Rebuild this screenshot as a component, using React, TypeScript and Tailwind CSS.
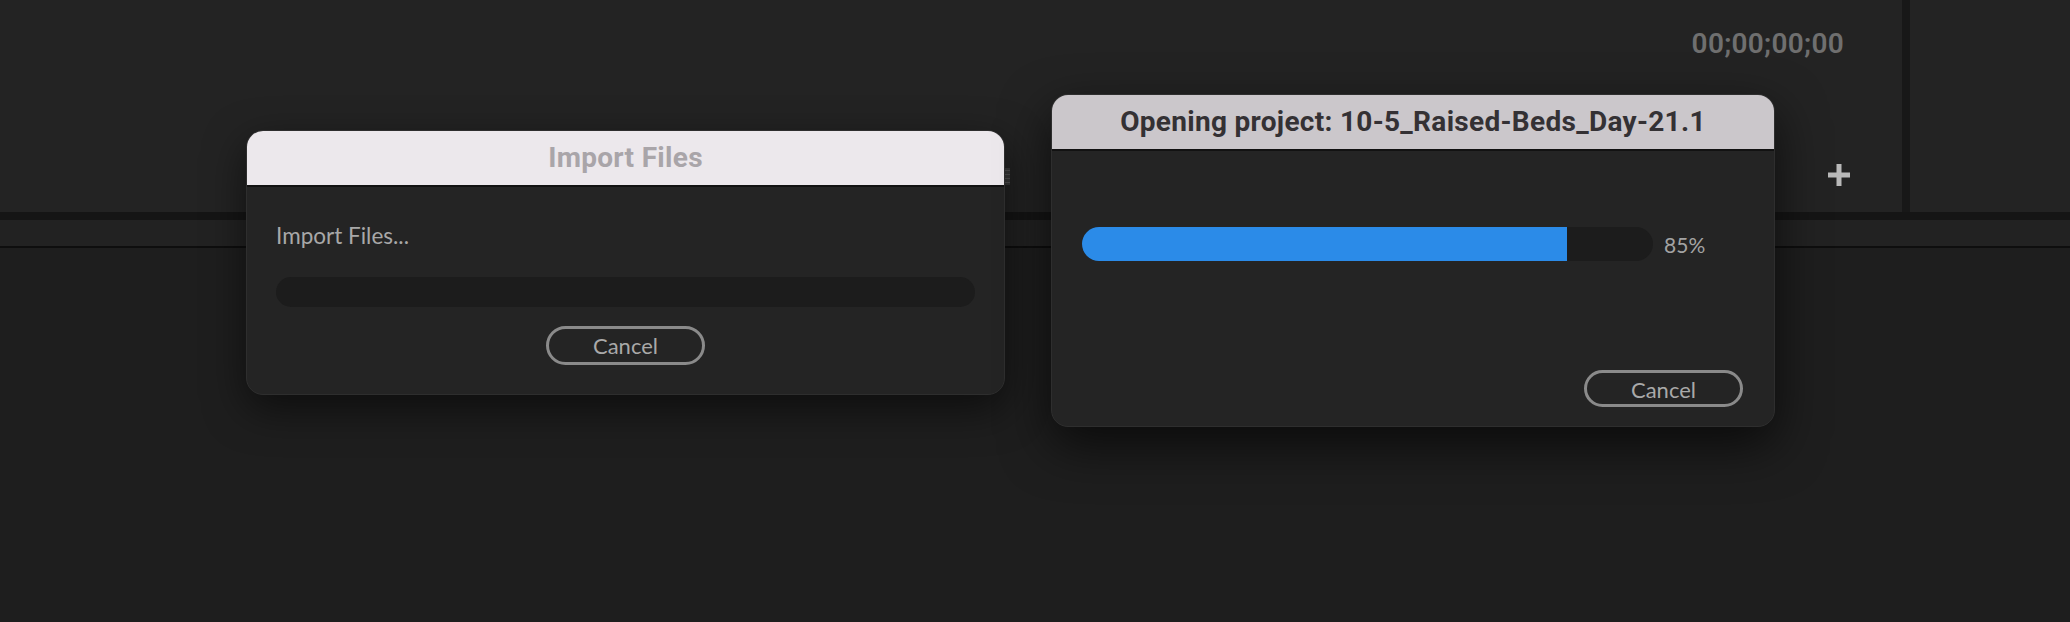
import React from 'react';

const sans = "font-['Lato','Open_Sans',sans-serif]";
const head = "font-['Roboto','Open_Sans',sans-serif]";

const CancelButton: React.FC<{ className?: string }> = ({ className = '' }) => (
  <button
    className={`w-[159px] rounded-full border-[3px] border-[#8a8a8a] bg-transparent text-[22px] text-[#a9a9a9] ${sans} ${className}`}
  >
    Cancel
  </button>
);

export default function App() {
  const percent = 85;

  return (
    <div className="relative h-[622px] w-[2070px] overflow-hidden bg-[#1e1e1e]">
      {/* Background workspace */}
      <div className="flex h-[212px] bg-[#232323]">
        <div className="flex flex-1 flex-col items-end">
          <div className={`mr-[58px] mt-[27px] text-[28px] font-semibold leading-[34px] tracking-[0.3px] text-[#6f6f6f] ${head}`}>
            00;00;00;00
          </div>
          <div className="mr-[52px] mt-[103px] flex h-[22px] w-[22px] items-center justify-center">
            <svg width="22" height="22" viewBox="0 0 22 22">
              <rect x="8.5" y="0" width="5" height="22" fill="#b9b9b9" />
              <rect x="0" y="8.5" width="22" height="5" fill="#b9b9b9" />
            </svg>
          </div>
        </div>
        <div className="w-[8px] bg-[#181818]" />
        <div className="w-[160px] bg-[#232323]" />
      </div>
      <div className="h-[8px] bg-[#151515]" />
      <div className="h-[26px] bg-[#222222]" />
      <div className="h-[2px] bg-[#0e0e0e]" />

      {/* small grip peeking out beside the first dialog */}
      <div className="absolute left-[1005px] top-[168px] flex h-[17px] w-[5px] flex-col justify-between bg-[#3a3a3a] py-[2px]">
        <div className="h-[1px] bg-[#555]" />
        <div className="h-[1px] bg-[#555]" />
        <div className="h-[1px] bg-[#555]" />
        <div className="h-[1px] bg-[#555]" />
      </div>

      {/* Import Files dialog */}
      <div className="absolute left-[246px] top-[130px] flex h-[265px] w-[759px] flex-col overflow-hidden rounded-[17px] border border-[#2e2e2e] bg-[#242424] shadow-[0_14px_40px_rgba(0,0,0,0.55)]">
        <div className="flex h-[56px] items-center justify-center border-b-2 border-[#121212] bg-[#ece8ec]">
          <span className={`text-[28px] font-bold tracking-[0.3px] text-[#a9a5a9] ${head}`}>Import Files</span>
        </div>
        <div className="flex flex-1 flex-col px-[29px] pt-[35px]">
          <div className={`text-[22.5px] leading-[28px] text-[#a8a8a8] ${sans}`}>Import Files...</div>
          <div className="mt-[27px] h-[30px] w-full rounded-full bg-[#1c1c1c]" />
          <div className="mt-[19px] flex justify-center">
            <CancelButton className="h-[39px]" />
          </div>
        </div>
      </div>

      {/* Opening project dialog */}
      <div className="absolute left-[1051px] top-[94px] flex h-[333px] w-[724px] flex-col overflow-hidden rounded-[17px] border border-[#2e2e2e] bg-[#242424] shadow-[0_18px_50px_rgba(0,0,0,0.65)]">
        <div className="flex h-[56px] items-center justify-center border-b-2 border-[#121212] bg-[#cbc7cb]">
          <span className={`text-[28px] font-bold tracking-[0.3px] text-[#343134] ${head}`}>
            Opening project: 10-5_Raised-Beds_Day-21.1
          </span>
        </div>
        <div className="flex flex-1 flex-col px-[30px] pb-[19px] pt-[76px]">
          <div className="flex items-center gap-[11px]">
            <div className="h-[34px] w-[571px] overflow-hidden rounded-full bg-[#1c1c1c]">
              <div className="h-full bg-[#2b8be8]" style={{ width: `${percent}%` }} />
            </div>
            <span className={`pt-[2px] text-[21px] text-[#a3a3a3] ${sans}`}>{percent}%</span>
          </div>
          <div className="mt-auto flex justify-end pr-[1px]">
            <CancelButton className="h-[37px]" />
          </div>
        </div>
      </div>
    </div>
  );
}
